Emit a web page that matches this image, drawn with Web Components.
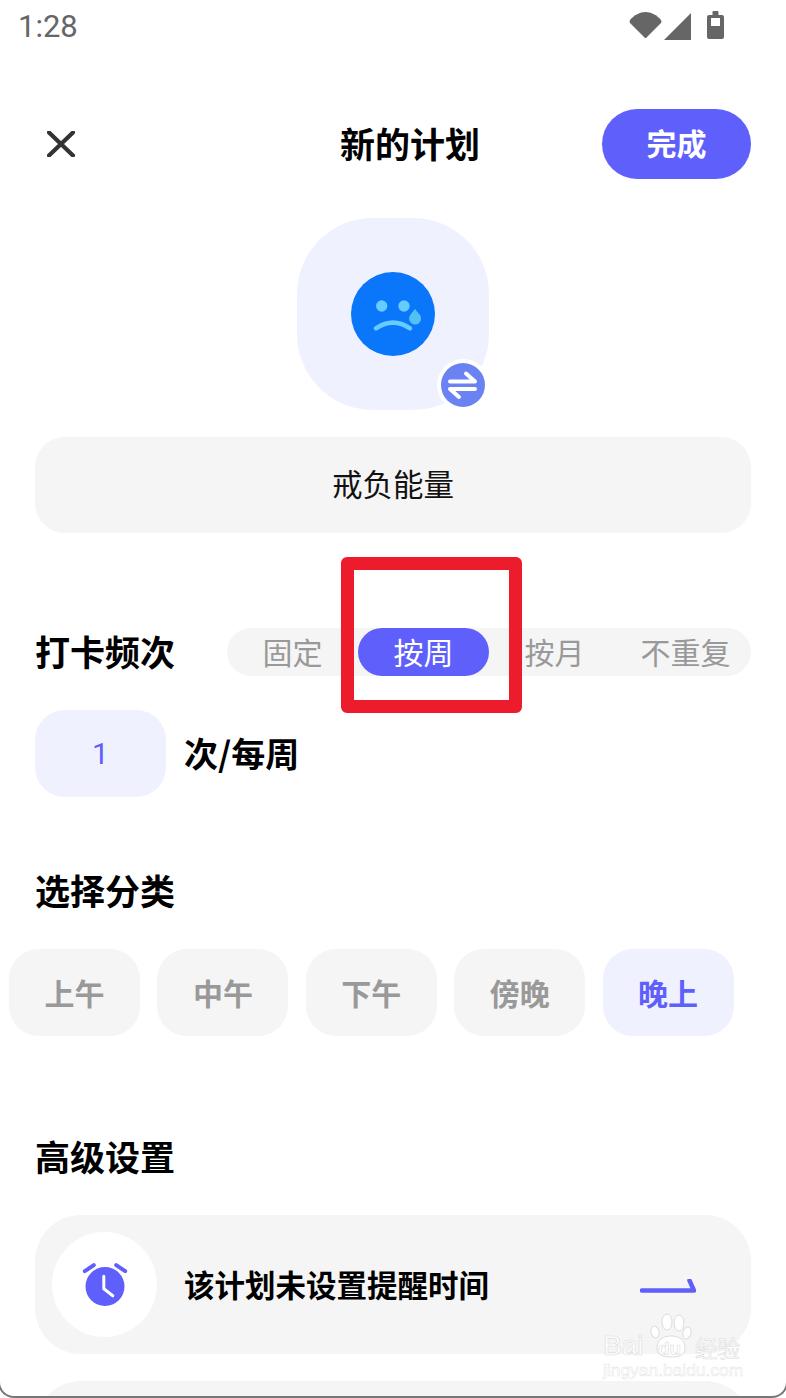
<!DOCTYPE html>
<html lang="zh"><head><meta charset="utf-8"><title>新的计划</title>
<style>
html,body{margin:0;padding:0;background:#fff}
body{font-family:"Noto Sans CJK SC","Noto Sans",sans-serif;color:#000}
</style></head><body>
<plan-screen>
  <status-bar slot="status"></status-bar>
  <top-bar>新的计划</top-bar>
  <plan-avatar></plan-avatar>
  <name-field>戒负能量</name-field>
  <freq-row></freq-row>
  <count-row></count-row>
  <section-title style="margin-top:71px">选择分类</section-title>
  <chip-row></chip-row>
  <section-title style="margin-top:98px">高级设置</section-title>
  <setting-card>该计划未设置提醒时间</setting-card>
  <setting-card class="next"></setting-card>
  <red-mark></red-mark>
  <baidu-mark></baidu-mark>
</plan-screen>
<script>
const sh=(el,html)=>{el.attachShadow({mode:'open'}).innerHTML=html;};
const def=(name,html)=>customElements.define(name,class extends HTMLElement{constructor(){super();sh(this,html);}});

def('plan-screen',`<style>:host{display:flex;flex-direction:column;position:relative;width:786px;height:1398px;overflow:hidden;background:#fff}
::slotted(*){flex:none}
.edge{position:absolute;left:-2px;right:-2px;bottom:0;height:34px;box-sizing:border-box;border:2px solid #777;border-top:0;border-radius:0 0 16px 16px;pointer-events:none;clip-path:inset(18px 0 0 0)}
</style><slot name="status"></slot><slot></slot><div class="edge"></div>`);

def('status-bar',`<style>:host{display:flex;align-items:center;justify-content:space-between;height:56px;padding:0 61px 2px 18px;box-sizing:border-box;color:#666;font:400 31px/36px Roboto,sans-serif}
svg{display:block}</style><span>1:28</span>
<svg width="96" height="32" viewBox="0 -1 96 32" fill="#666"><path d="M1 8C5 3 11 0 16.500 0S28 3 32 8q1 1.500 0 3L17.500 25.500q-1 1-2 0L1 11q-1-1.500 0-3z"/><path d="M62 1v27H35z"/><path fill-rule="evenodd" d="M78 5q0-2 2-2h3.500V0q0-1 1-1h4q1 0 1 1v3H93q2 0 2 2v20q0 2-2 2H80q-2 0-2-2zM82 6v8h9V6z"/></svg>`);

def('top-bar',`<style>:host{display:flex;align-items:center;height:70px;margin-top:53px;padding:0 35px 0 47px}
svg{display:block}
.t{margin-left:265px;font:700 35px/40px "Noto Sans CJK SC",sans-serif;color:#000;padding-bottom:2px}
.b{margin-left:auto;width:149px;height:70px;border-radius:35px;background:#5f5ffb;color:#fff;font:700 30px/66px "Noto Sans CJK SC",sans-serif;text-align:center}
</style><svg width="28" height="26" viewBox="0 0 28 26"><path d="M2 1.500 26 24.500M26 1.500 2 24.500" stroke="#333" stroke-width="4.200" stroke-linecap="round"/></svg><span class="t"><slot></slot></span><span class="b">完成</span>`);

def('plan-avatar',`<style>:host{display:block;position:relative;width:192px;height:192px;margin:39px 0 0 297px;background:#eff2fe;border-radius:76px}
.f{position:absolute;left:54px;top:54px;display:block}
.s{position:absolute;left:140px;top:141px;display:block}
</style><svg class="f" width="84" height="84" viewBox="0 0 84 84"><circle cx="42" cy="42" r="42" fill="#0a76f9"/><circle cx="30.700" cy="34" r="5.700" fill="#66ccff"/><circle cx="53" cy="34" r="5.700" fill="#66ccff"/><path d="M25 56.300Q42 45 59 56.300" fill="none" stroke="#66ccff" stroke-width="4.500" stroke-linecap="round"/><path d="M64 37l5 6a6 6 0 1 1-9.800 0z" fill="#52c1f5"/></svg>
<svg class="s" width="52" height="52" viewBox="0 0 52 52"><circle cx="26" cy="26" r="26" fill="#fff"/><circle cx="26" cy="26" r="22" fill="#6b83f2"/><path d="M13 22.500H38L29 14.500M38 30H13L22 38" fill="none" stroke="#fff" stroke-width="4" stroke-linecap="round" stroke-linejoin="round"/></svg>`);

def('name-field',`<style>:host{display:block;height:96px;margin:27px 35px 0;background:#f5f5f5;border-radius:30px;text-align:center;font:400 30.500px/92px "Noto Sans CJK SC",sans-serif;color:#111}</style><slot></slot>`);

def('freq-row',`<style>:host{display:flex;align-items:center;height:48px;margin:95px 35px 0 35px;justify-content:space-between}
.l{font:700 35px/46px "Noto Sans CJK SC",sans-serif;color:#000;height:48px}
.g{display:grid;grid-template-columns:repeat(4,131px);height:48px;background:#f5f5f5;border-radius:24px;font:400 30px/46px "Noto Sans CJK SC",sans-serif;color:#999;text-align:center}
.on{background:#5f5ffb;color:#fff;border-radius:24px}
</style><span class="l">打卡频次</span><div class="g"><span>固定</span><span class="on">按周</span><span>按月</span><span>不重复</span></div>`);

def('count-row',`<style>:host{display:flex;align-items:center;height:87px;margin:34px 0 0 35px;gap:18px}
.n{width:131px;height:87px;border-radius:30px;background:#eff2fe;color:#5f5ffb;font:400 30px/88px Roboto,sans-serif;text-align:center}
.u{font:700 34px/1.2 "Noto Sans CJK SC",sans-serif;color:#000}
</style><span class="n">1</span><span class="u">次/每周</span>`);

def('section-title',`<style>:host{display:block;height:48px;margin-left:35px;font:700 35px/44px "Noto Sans CJK SC",sans-serif;color:#000}</style><slot></slot>`);

def('chip-row',`<style>:host{display:flex;gap:17.400px;margin:33px 0 0 9px}
span{width:131px;height:87px;border-radius:30px;background:#f5f5f5;color:#999;font:700 30px/86px "Noto Sans CJK SC",sans-serif;text-align:center}
.on{background:#eff2fe;color:#5f5ffb}
</style><span>上午</span><span>中午</span><span>下午</span><span>傍晚</span><span class="on">晚上</span>`);

customElements.define('setting-card',class extends HTMLElement{constructor(){super();
 const filled=`<span class="c"><svg width="56" height="56" viewBox="0 0 56 56"><path d="M7.800 14.200 16.800 8.200M48.200 14.200 39.200 8.200" stroke="#5f5ffb" stroke-width="4" stroke-linecap="round"/><circle cx="28" cy="29.500" r="19.500" fill="#5f5ffb"/><path d="M26.800 19.200V31.800L35.800 38.800" fill="none" stroke="#fff" stroke-width="3" stroke-linecap="round" stroke-linejoin="round"/></svg></span><span class="t"><slot></slot></span><svg class="a" width="56" height="14" viewBox="0 0 56 14"><path d="M2 11.500H54L49.500 1.500" fill="none" stroke="#5f5ffb" stroke-width="4.500" stroke-linecap="round" stroke-linejoin="round"/></svg>`;
 sh(this,`<style>:host{display:flex;align-items:center;height:139px;margin:33px 35px 0;padding:0 55px 0 17px;box-sizing:border-box;background:#f5f5f5;border-radius:46px}
:host(.next){margin-top:27px}
.c{width:105px;height:105px;border-radius:50%;background:#fff;display:flex;align-items:center;justify-content:center;flex:none}
.t{margin-left:27px;font:700 30.500px/36px "Noto Sans CJK SC",sans-serif;color:#000;padding-bottom:2px}
.a{margin-left:auto;display:block;margin-top:2px}</style>${this.classList.contains('next')?'':filled}`);
}});

def('red-mark',`<style>:host{position:absolute;left:341px;top:557px;width:181px;height:156px;box-sizing:border-box;border:13px solid #ed1c2c;border-radius:6px}</style>`);

def('baidu-mark',`<style>:host{position:absolute;left:602px;top:1312px;width:142px;height:70px}
span{position:absolute;color:#fff;line-height:1;white-space:nowrap}
.b{left:1px;top:20px;font:400 28px/1 "Liberation Sans",sans-serif;-webkit-text-stroke:.6px #dcdcdc}
.d{left:56px;top:27px;font:700 19px/1 "Liberation Sans",sans-serif;-webkit-text-stroke:.6px #dcdcdc}
.j{left:1px;top:50px;font:400 17.400px/1 "Liberation Sans",sans-serif;-webkit-text-stroke:.4px #ddd}
.z{left:93px;top:24px;font:400 22.500px/1 "Noto Sans CJK SC",sans-serif;-webkit-text-stroke:.6px #dcdcdc}
svg{position:absolute;left:46px;top:0}
</style><svg width="50" height="50" viewBox="0 0 50 50" fill="#fff" stroke="#dcdcdc" stroke-width="1"><ellipse cx="7" cy="20" rx="4" ry="6" transform="rotate(-15 7 20)"/><ellipse cx="19" cy="10" rx="5" ry="8"/><ellipse cx="31" cy="11" rx="5" ry="8"/><ellipse cx="39" cy="21" rx="4" ry="6" transform="rotate(15 39 21)"/><path d="M9 36c0-9 7-12 14-12s14 3 14 12c0 8-7 9-14 9S9 44 9 36z"/></svg>
<span class="b">Bai</span><span class="d">du</span><span class="z">经验</span><span class="j">jingyan.baidu.com</span>`);
</script>
</body></html>
